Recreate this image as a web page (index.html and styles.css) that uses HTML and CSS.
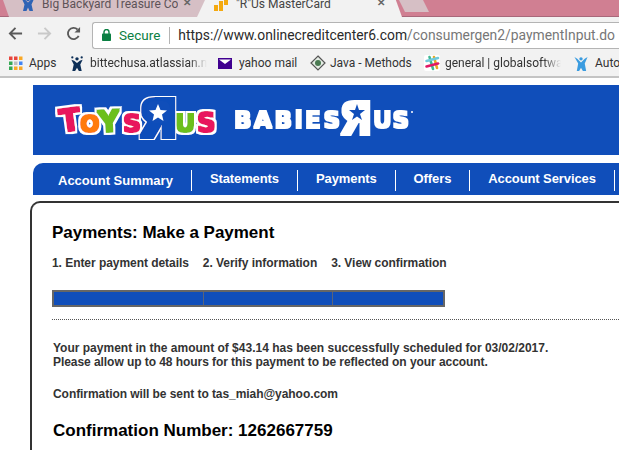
FILE: index.html
```html
<!DOCTYPE html>
<html lang="en">
<head>
<meta charset="utf-8">
<title>"R"Us MasterCard</title>
<link rel="stylesheet" href="styles.css">
</head>
<body>
<svg class="defs" width="0" height="0" aria-hidden="true">
  <defs>
    <filter id="toysfat" x="-20%" y="-20%" width="140%" height="140%">
      <feMorphology in="SourceGraphic" operator="dilate" radius="1.300" result="fat"/>
      <feMorphology in="SourceAlpha" operator="dilate" radius="2.500" result="outer"/>
      <feFlood flood-color="#fff"/>
      <feComposite in2="outer" operator="in" result="white"/>
      <feMerge><feMergeNode in="white"/><feMergeNode in="fat"/></feMerge>
    </filter>
    <filter id="rfat" x="-20%" y="-20%" width="140%" height="140%">
      <feMorphology in="SourceGraphic" operator="dilate" radius="2.200" result="fat"/>
      <feMorphology in="SourceAlpha" operator="dilate" radius="3" result="outer"/>
      <feFlood flood-color="#fff"/>
      <feComposite in2="outer" operator="in" result="white"/>
      <feMerge><feMergeNode in="white"/><feMergeNode in="fat"/></feMerge>
    </filter>
    <filter id="babyfat" x="-10%" y="-20%" width="120%" height="140%">
      <feMorphology operator="dilate" radius="1"/>
    </filter>
  </defs>
</svg>
<header class="chrome">
  <div class="tabstrip">
    <div class="tab tab-inactive">
      <svg class="favicon" viewBox="0 0 14 14"><path d="M1 2l3.500 1L7 5.500 9.500 3 13 2l-2.500 5.500L12 14H8.500L7 10.500 5.500 14H2l1.500-6.500z" fill="#2f63b5"/><circle cx="7" cy="2.500" r="1.800" fill="#2f63b5"/></svg>
      <span class="tab-title">Big Backyard Treasure Co</span>
      <span class="tab-close">✕</span>
    </div>
    <div class="tab tab-active">
      <svg class="favicon" viewBox="0 0 14 14"><rect x="0" y="8" width="4" height="6" fill="#f4a90f"/><rect x="5" y="4" width="4" height="10" fill="#f4a90f"/><rect x="10" y="0" width="4" height="8" fill="#f4a90f"/></svg>
      <span class="tab-title">"R"Us MasterCard</span>
      <span class="tab-close">✕</span>
    </div>
    <div class="tab-new"></div>
  </div>
  <div class="toolbar">
    <svg class="nav-icon" viewBox="0 0 16 16"><path d="M15 8H2.500M8 2L2 8l6 6" fill="none" stroke="#5a5a5a" stroke-width="2"/></svg>
    <svg class="nav-icon" viewBox="0 0 16 16"><path d="M1 8h12.500M8 2l6 6-6 6" fill="none" stroke="#c9c9c9" stroke-width="2"/></svg>
    <svg class="nav-icon" viewBox="0 0 16 16"><path d="M13.500 10.500A6 6 0 1 1 12.300 3.700" fill="none" stroke="#5a5a5a" stroke-width="2"/><path d="M15 1v6H9z" fill="#5a5a5a"/></svg>
    <div class="omnibox">
      <svg class="lock" viewBox="0 0 9 12"><rect x="0" y="4.500" width="9" height="7.500" rx=".8" fill="#0b8043"/><path d="M2 5V3a2.500 2.500 0 0 1 5 0v2" fill="none" stroke="#0b8043" stroke-width="1.400"/></svg>
      <span class="secure">Secure</span>
      <span class="url"><span class="url-host">https://www.onlinecreditcenter6.com</span>/consumergen2/paymentInput.do</span>
    </div>
  </div>
  <nav class="bookmarks">
    <div class="bm bm-apps">
      <svg class="bm-icon" viewBox="0 0 14 14">
        <rect x="0" y="0" width="3.500" height="3.500" fill="#e8453c"/><rect x="5" y="0" width="3.500" height="3.500" fill="#e8453c"/><rect x="10" y="0" width="3.500" height="3.500" fill="#f9a825"/>
        <rect x="0" y="5" width="3.500" height="3.500" fill="#34a853"/><rect x="5" y="5" width="3.500" height="3.500" fill="#bdbdbd"/><rect x="10" y="5" width="3.500" height="3.500" fill="#4285f4"/>
        <rect x="0" y="10" width="3.500" height="3.500" fill="#34a853"/><rect x="5" y="10" width="3.500" height="3.500" fill="#f9a825"/><rect x="10" y="10" width="3.500" height="3.500" fill="#f9a825"/>
      </svg>
      <span>Apps</span>
    </div>
    <div class="bm bm-bitte">
      <svg class="bm-icon" viewBox="0 0 14 16"><circle cx="7" cy="3" r="1.800" fill="#0d2f57"/><circle cx="2" cy="1.500" r="1.200" fill="#0d2f57"/><circle cx="12" cy="1.500" r="1.200" fill="#0d2f57"/><path d="M1 4l3 1 3 2.500L10 5l3-1-2.500 5L12 16H9L7 12.500 5 16H2l1.500-7z" fill="#0d2f57"/></svg>
      <span class="bm-fade">bittechusa.atlassian.ne</span>
    </div>
    <div class="bm bm-yahoo">
      <svg class="bm-icon bm-env" viewBox="0 0 14 11"><rect width="14" height="11" fill="#400090"/><path d="M1 1.500h12L7 6z" fill="#fff"/></svg>
      <span>yahoo mail</span>
    </div>
    <div class="bm bm-java">
      <svg class="bm-icon bm-diamond" viewBox="0 0 16 16"><path d="M8 1l7 7-7 7-7-7z" fill="#e4ece4" stroke="#555" stroke-width="1.200"/><circle cx="8" cy="8" r="3" fill="#4a7a52"/></svg>
      <span>Java - Methods</span>
    </div>
    <div class="bm bm-general">
      <svg class="bm-icon bm-slack" viewBox="0 0 16 16"><rect width="16" height="16" rx="2" fill="#fff"/><path d="M5.500 2l3.500 12" stroke="#3eb890" stroke-width="2.600" stroke-linecap="round"/><path d="M10 2l3 11" stroke="#e8a723" stroke-width="2.600" stroke-linecap="round"/><path d="M2.500 6L14 3" stroke="#70cadb" stroke-width="2.600" stroke-linecap="round"/><path d="M2.500 11.500L14 8.500" stroke="#e01765" stroke-width="2.600" stroke-linecap="round"/></svg>
      <span class="bm-fade bm-fade-general">general | globalsoftwa</span>
    </div>
    <div class="bm bm-auto">
      <svg class="bm-icon" viewBox="0 0 14 16"><circle cx="7" cy="3" r="1.800" fill="#3b9ce0"/><path d="M0 1l3 2 4 4 4-4 3-2-3 7 1.500 8H9L7 12.500 5 16H2.500L4 8z" fill="#3b9ce0"/></svg>
      <span>Auto</span>
    </div>
  </nav>
</header>

<main class="page">
  <section class="banner">
    <svg class="logo logo-toys" viewBox="0 0 165 50" role="img" aria-label="Toys R Us">
      <g filter="url(#toysfat)">
        <text x="2" y="35" class="lt lt-pink" font-size="31" transform="rotate(-8 12 22)">T</text>
        <text x="23" y="36" class="lt lt-orange" font-size="23">O</text>
        <text x="41" y="36" class="lt lt-green" font-size="30" transform="rotate(-4 50 25)">Y</text>
        <text x="66" y="36" class="lt lt-pink" font-size="25">S</text>
        <text x="118" y="36" class="lt lt-green" font-size="25">U</text>
        <text x="140" y="36" class="lt lt-pink" font-size="26">S</text>
      </g>
      <g filter="url(#rfat)">
        <text x="81" y="41" class="lt lt-r" font-size="52">Я</text>
      </g>
      <rect class="r-bowl-blue" x="90" y="5" width="23" height="22" rx="7"/>
      <polygon points="101,8 103.500,14 110,14.500 105,18.500 106.500,25 101,21.500 95.500,25 97,18.500 92,14.500 98.500,14" fill="#fff"/>
    </svg>
    <svg class="logo logo-babies" viewBox="0 0 182 42" role="img" aria-label="Babies R Us">
      <g filter="url(#babyfat)">
        <text x="1" y="28" class="lb" font-size="23" textLength="106">BABiES</text>
        <text x="105" y="35" class="lb" font-size="46">Я</text>
        <text x="140" y="28" class="lb" font-size="23" textLength="36">US</text>
      </g>
      <rect class="r-bowl-white" x="114" y="3" width="20" height="20" rx="5"/>
      <polygon points="124,4 126,10 132,10 127,14 129,20 124,16.500 119,20 121,14 116,10 122,10" fill="#104eba"/>
      <circle cx="179" cy="12" r="1" fill="#fff"/>
    </svg>
  </section>

  <nav class="mainnav">
    <a class="nav-item nav-first">Account Summary</a>
    <a class="nav-item">Statements</a>
    <a class="nav-item">Payments</a>
    <a class="nav-item">Offers</a>
    <a class="nav-item">Account Services</a>
  </nav>

  <section class="card">
    <h1 class="card-title">Payments: Make a Payment</h1>
    <ol class="steps">
      <li>1. Enter payment details</li>
      <li>2. Verify information</li>
      <li>3. View confirmation</li>
    </ol>
    <div class="progress">
      <div class="seg seg-1"></div>
      <div class="seg seg-2"></div>
      <div class="seg seg-3"></div>
    </div>
    <div class="rule"></div>
    <p class="msg">Your payment in the amount of $43.14 has been successfully scheduled for 03/02/2017.<br><span class="msg-tight">Please allow up to 48 hours for this payment to be reflected on your account.</span></p>
    <p class="msg msg-sent">Confirmation will be sent to tas_miah@yahoo.com</p>
    <h2 class="conf">Confirmation Number: 1262667759</h2>
  </section>
</main>
</body>
</html>
```
FILE: styles.css
```css
* { box-sizing: border-box; }
html, body { margin: 0; padding: 0; }
body {
  width: 619px;
  height: 450px;
  overflow: hidden;
  background: #fff;
  font-family: "Liberation Sans", Arial, sans-serif;
}
.defs { display: block; height: 0; }

/* browser chrome */
.chrome {
  height: 78px;
  background: #f2f2f2;
  border-bottom: 2px solid #c4c4c4;
  font-family: Roboto, "Noto Sans", sans-serif;
}
.tabstrip {
  height: 17px;
  display: flex;
  background: #d07f92;
  border-bottom: 1px solid #a8687a;
}
.tab {
  height: 17px;
  display: flex;
  align-items: flex-start;
  font-size: 12px;
  flex: none;
}
.tab-inactive {
  width: 203px;
  margin-left: 3px;
  padding-left: 18px;
  background: #d6bfc5;
  color: #5e5358;
  clip-path: polygon(0 0, 100% 0, 96.500% 100%, 6px 100%);
}
.tab-active {
  width: 205px;
  margin-left: -9px;
  padding-left: 17px;
  background: #f2f2f2;
  color: #444;
  clip-path: polygon(8px 0, 97% 0, 100% 100%, 0 100%);
}
.tab-title {
  white-space: nowrap;
  overflow: hidden;
  line-height: 16px;
  margin-top: -4px;
}
.tab-inactive .tab-title { width: 136px; margin-left: 7px; }
.tab-active .tab-title { width: 136px; margin-left: 8px; }
.tab-close {
  font-size: 10px;
  line-height: 12px;
  margin: -3px 0 0 5px;
  color: #666;
  font-weight: 700;
}
.favicon { width: 14px; height: 14px; margin-top: -3px; flex: none; }
.tab-new {
  width: 30px;
  height: 12px;
  flex: none;
  margin-left: -3px;
  background: #d6bfc5;
  clip-path: polygon(0 0, 80% 0, 100% 100%, 20% 100%);
}
.toolbar {
  height: 33px;
  display: flex;
  align-items: center;
  padding-left: 8px;
}
.nav-icon { width: 15px; height: 15px; margin-right: 14px; flex: none; }
.nav-icon:nth-of-type(3) { margin-right: 11px; }
.omnibox {
  flex: 1;
  height: 27px;
  margin-top: 3px;
  display: flex;
  align-items: center;
  background: #fff;
  border: 1px solid #b4b4b4;
  border-right: 0;
  border-radius: 3px 0 0 3px;
  padding-left: 9px;
  white-space: nowrap;
}
.lock { width: 9px; height: 12px; flex: none; }
.secure {
  color: #0b8043;
  font-size: 13.500px;
  margin-left: 8px;
  padding-right: 9px;
  border-right: 1px solid #b4b4b4;
  line-height: 17px;
}
.url { font-size: 13.860px; color: #777; margin-left: 8px; }
.url-host { color: #2a2a2a; }
.bookmarks {
  height: 26px;
  display: flex;
  align-items: center;
  font-size: 12px;
  color: #333;
  white-space: nowrap;
  padding-left: 9px;
  overflow: hidden;
}
.bm { display: flex; align-items: center; flex: none; }
.bm-icon { width: 14px; height: 15px; margin-right: 6px; flex: none; }
.bm-env { height: 11px; margin-right: 7px; }
.bm-diamond, .bm-slack { width: 16px; height: 16px; margin-right: 5px; }
.bm-diamond { margin-right: 4px; }
.bm-apps { width: 61px; }
.bm-bitte { width: 148px; }
.bm-yahoo { width: 92px; }
.bm-java { width: 114px; }
.bm-general { width: 150px; }
.bm-auto { width: 45px; }
.bm-auto .bm-icon { margin-right: 7px; }
.bm-fade {
  width: 117px;
  overflow: hidden;
  -webkit-mask-image: linear-gradient(to right, #000 85%, transparent);
  mask-image: linear-gradient(to right, #000 85%, transparent);
}
.bm-fade-general { width: 116px; }

/* page */
.page { padding-left: 33px; }
.banner {
  height: 70px;
  margin-top: 7px;
  background: #104eba;
  display: flex;
  align-items: flex-start;
  padding: 11px 0 0 24px;
  gap: 11px;
}
.logo { flex: none; overflow: visible; }
.logo-toys { width: 165px; height: 50px; }
.logo-babies { width: 182px; height: 42px; margin-top: 4px; }
.lt, .lb {
  font-family: "DejaVu Sans", sans-serif;
  font-weight: 700;
}
.lt-pink { fill: #e8175d; }
.lt-orange { fill: #ff7a0a; }
.lt-green { fill: #6cbf1e; }
.lt-r { fill: #104eba; }
.lb { fill: #fff; }
.r-bowl-blue { fill: #104eba; }
.r-bowl-white { fill: #fff; }

.mainnav {
  height: 32px;
  margin-top: 8px;
  background: #104eba;
  border-radius: 10px 0 0 0;
  display: flex;
  align-items: center;
  white-space: nowrap;
}
.nav-item {
  display: block;
  color: #fff;
  font-weight: 700;
  font-size: 13px;
  letter-spacing: -.1px;
  line-height: 18px;
  height: 21px;
  margin-top: 3px;
  padding: 0 18px;
  border-right: 1px solid #fff;
  flex: none;
}
.nav-first { padding: 2px 18px 0 25px; letter-spacing: 0; }

.card {
  margin: 6px 0 0 -3px;
  height: 249px;
  border: solid #333;
  border-width: 2px 0 0 2px;
  border-radius: 10px 0 0 0;
  padding: 21px 0 0 20px;
  color: #333;
}
.card-title {
  margin: 0;
  font-size: 17px;
  line-height: 18px;
  letter-spacing: -.03px;
  color: #000;
  font-weight: 700;
}
.steps {
  list-style: none;
  display: flex;
  gap: 14px;
  margin: 14px 0 0;
  padding: 0;
  font-size: 12px;
  font-weight: 700;
  line-height: 14px;
  letter-spacing: -.05px;
  color: #333;
}
.progress {
  display: flex;
  width: 393px;
  height: 17px;
  margin-top: 20px;
  background: #104eba;
  border: 2px solid #666;
}
.seg { height: 100%; border-right: 1px solid #5a6478; }
.seg-1 { width: 150px; }
.seg-2 { width: 129px; }
.seg-3 { flex: 1; border-right: 0; }
.rule {
  margin-top: 12px;
  border-top: 1px dotted #555;
}
.msg {
  margin: 21px 0 0 1px;
  font-size: 12px;
  line-height: 14px;
  font-weight: 700;
  color: #333;
}
.msg-tight { letter-spacing: -.06px; }
.msg-sent { margin-top: 18px; letter-spacing: -.06px; }
.conf {
  margin: 20px 0 0 1px;
  font-size: 17px;
  line-height: 20px;
  font-weight: 700;
  color: #000;
}
```
